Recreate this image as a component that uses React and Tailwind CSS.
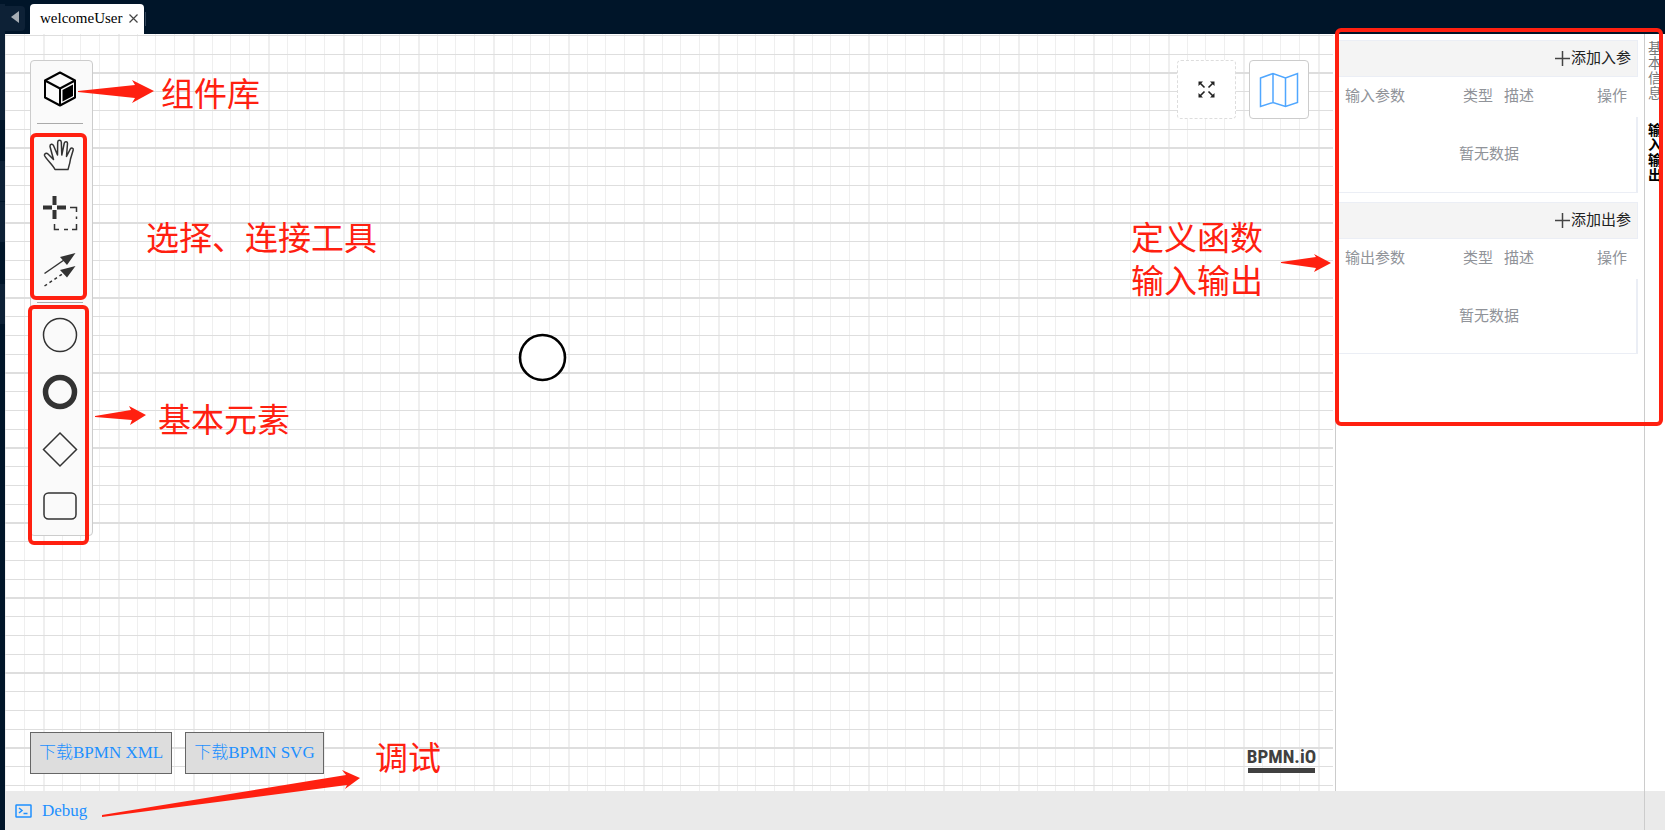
const RED = '#ff2010';

function Note({ className, children }) {
  return (
    <p className={'absolute z-20 whitespace-nowrap text-[33px] leading-[43px] text-[#ff2010] ' + className}>{children}</p>
  );
}

function Frame({ className }) {
  return <div className={'pointer-events-none absolute z-20 rounded-md border-4 border-[#ff2010] ' + className} />;
}

function Arrow({ className, width, height, points }) {
  return (
    <svg className={'pointer-events-none absolute z-20 ' + className} width={width} height={height} aria-hidden="true">
      <polygon points={points} fill={RED} />
    </svg>
  );
}

function Grid() {
  return (
    <svg className="absolute inset-0 h-full w-full" aria-hidden="true">
      <defs>
        <pattern id="grid" x="38" y="38" width="75" height="75" patternUnits="userSpaceOnUse">
          <path d="M19.5 0V75M37.5 0V75M56.5 0V75" stroke="#efefef" />
          <path d="M1 0V75" stroke="#efefef" strokeWidth="2" />
          <path d="M0 19.5H75M0 38.5H75M0 57.5H75" stroke="#dedede" />
          <path d="M0 1H75" stroke="#dedede" strokeWidth="2" />
        </pattern>
      </defs>
      <rect width="100%" height="100%" fill="url(#grid)" />
    </svg>
  );
}

const stroke = { fill: 'none', stroke: '#333', strokeWidth: 1.5 };

const tools = [
  {
    name: 'Hand tool',
    art: (
      <path
        {...stroke}
        strokeLinejoin="round"
        d="M13 34.500 C11 30 4 24 2.500 20.500 C2 18.500 4.500 17.500 6 19 L11.500 24.500 L8 11.500 C7.800 9 10.500 8.500 11.500 10.500 L15.500 20 L15.700 7 C16 4.700 19 4.700 19.300 7 L19.800 20 L22.300 8 C23 6 25.700 6.500 25.500 8.500 L24.500 21.500 L28.300 14 C29.500 12 31.700 13.200 31.200 15 L28.500 24 C28 28 27 31 26 34.500 Z"
      />
    ),
  },
  {
    name: 'Lasso tool',
    art: (
      <g fill="none" stroke="#333">
        <path strokeWidth="4" d="M12.500 4V13M12.500 18V27M1 15.500H10M15 15.500H24" />
        <path strokeWidth="1.500" d="M28 15.500H34.500V20M34.500 24.500V27M34.500 32V37.500H30M26 37.500H22M17 37.500H12.500V32" />
      </g>
    ),
  },
  {
    name: 'Connect tool',
    art: (
      <g stroke="#333" strokeWidth="1.500" fill="none">
        <path d="M2.500 24.500L22 11" />
        <path d="M2.500 37L24 22.500" strokeDasharray="3 3" />
        <path fill="#333" stroke="none" d="M33.500 4L25 16L18 8ZM33.500 17L25 28.500L18 21Z" />
      </g>
    ),
  },
];

const shapes = [
  { name: 'Start event', art: <circle cx="18" cy="19" r="16.500" {...stroke} /> },
  { name: 'End event', art: <circle cx="18" cy="19" r="14.500" fill="none" stroke="#333" strokeWidth="5.500" /> },
  { name: 'Gateway', art: <path {...stroke} d="M18 3L34.500 19.500L18 36L1.500 19.500Z" /> },
  { name: 'Task', art: <rect x="2" y="6" width="32" height="26" rx="4.500" {...stroke} /> },
];

function ToolButton({ name, art }) {
  return (
    <button type="button" aria-label={name} className="flex h-[57px] w-full items-center justify-center">
      <svg width="36" height="40" viewBox="0 0 36 40" aria-hidden="true">{art}</svg>
    </button>
  );
}

function Palette() {
  return (
    <div className="absolute left-[25px] top-[26px] flex h-[476px] w-[63px] flex-col rounded-sm border border-[#ccc] bg-[#fafafa] pr-[3px]">
      <button type="button" aria-label="Component library" className="flex h-[58px] items-center justify-center">
        <svg width="34" height="36" viewBox="0 0 34 36" fill="none" stroke="#000" strokeWidth="2" strokeLinejoin="round" aria-hidden="true">
          <path d="M17 1.500L32 9.500V26.500L17 34.500L2 26.500V9.500ZM2 9.500L17 17.500L32 9.500M17 17.500V34.500" />
          <path fill="#000" stroke="none" d="M19.500 19L30 13.500V25L19.500 30.500Z" />
        </svg>
      </button>
      <hr className="mx-[6px] mt-[6px] border-[#aaa]" />
      <div className="flex flex-col pt-[2px]">
        {tools.map((t) => <ToolButton key={t.name} {...t} />)}
      </div>
      <hr className="mx-[6px] mt-[5px] border-[#aaa]" />
      <div className="flex flex-col pt-1">
        {shapes.map((s) => <ToolButton key={s.name} {...s} />)}
      </div>
    </div>
  );
}

function Params({ title, action }) {
  return (
    <section>
      <div className="flex h-[37px] items-center justify-end border-y border-r border-[#ebeef5] bg-[#f4f4f4] pr-[6px]">
        <button type="button" className="flex items-center gap-px text-[15px] text-[#222]">
          <svg width="15" height="15" stroke="#444" strokeWidth="1.500" aria-hidden="true"><path d="M0 7.500H15M7.500 0V15" /></svg>
          {action}
        </button>
      </div>
      <table className="w-full table-fixed border-collapse text-[15px] leading-5 text-[#909399]">
        <colgroup>
          <col />
          <col className="w-[41px]" />
          <col className="w-[93px]" />
          <col className="w-[40px]" />
        </colgroup>
        <thead>
          <tr className="h-10 text-left">
            <th className="pb-[2px] pl-[9px] font-normal">{title}</th>
            <th className="pb-[2px] font-normal">类型</th>
            <th className="pb-[2px] font-normal">描述</th>
            <th className="pb-[2px] font-normal">操作</th>
          </tr>
        </thead>
        <tbody>
          <tr className="h-[75px]">
            <td colSpan={4} className="border-b border-r-2 border-[#ebeef5] pl-[6px] text-center">暂无数据</td>
          </tr>
        </tbody>
      </table>
    </section>
  );
}

export default function App() {
  return (
    <div className="relative flex min-h-screen overflow-hidden bg-white font-['Liberation_Sans','Noto_Sans_CJK_SC',sans-serif]">
      <div className="flex w-[5px] shrink-0 flex-col bg-[#001529]">
        <div className="h-[4px]" />
        <div className="h-[116px] bg-[#0d2136]" />
        <div className="h-[41px]" />
        <div className="mb-px h-[40px] bg-[#0d2136]" />
        <div className="h-[40px] bg-[#0d2136]" />
        <div className="h-[42px]" />
        <div className="h-[40px] bg-[#0d2136]" />
      </div>
      <div className="flex min-w-0 flex-1 flex-col">
        <header className="flex h-[34px] shrink-0 bg-[#001529] pt-[4px] font-['Liberation_Serif',serif]">
          <button type="button" aria-label="Scroll tabs left" className="mt-[2px] mr-[5px] flex h-[25px] w-5 items-start justify-center rounded-r bg-[#0d2136] pt-[5px]">
            <svg width="8" height="12" fill="#a6adb4" aria-hidden="true"><path d="M8 0V12L0 6Z" /></svg>
          </button>
          <div className="flex w-[114px] items-center rounded-t bg-white pl-[10px]">
            <a href="#welcomeUser" className="flex-1 pb-[3px] text-[15px] leading-5 text-black">welcomeUser</a>
            <button type="button" aria-label="Close tab" className="mr-[6px] pb-[2px]">
              <svg width="9" height="9" stroke="#444" strokeWidth="1.200" aria-hidden="true"><path d="M0.500 0.500L8.500 8.500M8.500 0.500L0.500 8.500" /></svg>
            </button>
          </div>
          <div className="ml-px mt-2 h-[14px] w-px bg-[#334559]" />
        </header>

        <div className="flex flex-1">
          <main className="relative mr-[2px] flex-1">
            <Grid />
            <Palette />
            <svg className="absolute left-[513px] top-[299px]" width="50" height="50" aria-hidden="true">
              <circle cx="24.500" cy="24.500" r="22.500" fill="#fff" stroke="#000" strokeWidth="2.600" />
            </svg>
            <div className="absolute right-6 top-[26px] flex gap-[13px]">
              <button type="button" aria-label="Full screen" className="flex h-[59px] w-[59px] items-center justify-center rounded-sm border border-dashed border-[#ddd] bg-white">
                <svg width="17" height="17" viewBox="0 0 17 17" aria-hidden="true">
                  <path fill="none" stroke="#222" strokeWidth="1.600" d="M2 2L6.500 6.500M15 2L10.500 6.500M2 15L6.500 10.500M15 15L10.500 10.500" />
                  <path fill="#222" d="M0.500 0.500H5L0.500 5ZM16.500 0.500H12L16.500 5ZM0.500 16.500H5L0.500 12ZM16.500 16.500H12L16.500 12Z" />
                </svg>
              </button>
              <button type="button" aria-label="Minimap" className="flex h-[59px] w-[60px] items-center justify-center rounded-sm border border-[#ccc] bg-white">
                <svg width="40" height="36" fill="none" stroke="#50a7ff" strokeWidth="1.500" aria-hidden="true">
                  <path d="M1.500 6L14 1.500L26.500 6L38.500 1.500V30.500L26.500 34.500L14 30.500L1.500 34.500ZM14 1.500V30.500M26.500 6V34.500" />
                </svg>
              </button>
            </div>
            <div className="absolute bottom-[17px] left-[25px] flex gap-[13px] font-['Liberation_Serif','Noto_Sans_CJK_SC',serif]">
              <button type="button" className="h-[42px] border border-[#666] bg-[#ddd] px-2 text-[17px] font-light text-[#1e90ff]">下载BPMN XML</button>
              <button type="button" className="h-[42px] border border-[#666] bg-[#ddd] px-2 text-[17px] font-light text-[#1e90ff]">下载BPMN SVG</button>
            </div>
            <a
              href="#bpmn-io"
              className="absolute bottom-[18px] right-[18px] flex w-[67px] justify-center border-b-[5px] border-[#404040] font-['Roboto_Condensed','Liberation_Sans_Narrow','Liberation_Sans',sans-serif] text-[19px] font-bold leading-[22px] text-[#404040]"
            >
              BPMN.iO
            </a>
          </main>

          <aside className="flex w-[330px] shrink-0 border-l border-[#ccc]">
            <div className="flex flex-1 flex-col gap-[9px] pr-[6px] pt-[6px]">
              <Params title="输入参数" action="添加入参" />
              <Params title="输出参数" action="添加出参" />
            </div>
            <nav className="flex w-[21px] flex-col gap-[22px] border-l border-[#ccc] pl-[3px] pt-[7px] text-[14px] leading-[15px]">
              <a href="#basic" className="w-[15px] break-all text-[#777]">基本信息</a>
              <a href="#io" className="w-[15px] break-all font-bold text-black">输入输出</a>
            </nav>
          </aside>
        </div>

        <footer className="flex h-[39px] shrink-0 justify-between bg-[#eaeaea]">
          <button type="button" className="flex items-center gap-[10px] pl-[10px] font-['Liberation_Serif',serif] text-[17px] text-[#1e90ff]">
            <svg width="17" height="14" fill="none" stroke="#1e90ff" strokeWidth="1.500" aria-hidden="true">
              <rect x="1" y="1" width="15" height="12" rx="0.500" />
              <path d="M4 4L7 6.500L4 9M8.500 9.500H12.500" />
            </svg>
            Debug
          </button>
          <div className="w-[21px] border-l border-[#ccc]" />
        </footer>
      </div>

      <Frame className="left-[30px] top-[133px] h-[167px] w-[57px]" />
      <Frame className="left-[28px] top-[305px] h-[240px] w-[61px]" />
      <Frame className="right-[2px] top-[28px] h-[398px] w-[328px]" />
      <Note className="left-[161px] top-[73px]">组件库</Note>
      <Note className="left-[146px] top-[217px]">选择、连接工具</Note>
      <Note className="left-[158px] top-[399px]">基本元素</Note>
      <Note className="left-[375px] top-[737px]">调试</Note>
      <Note className="right-[402px] top-[217px]">定义函数<br />输入输出</Note>
      <Arrow className="left-[78px] top-[78px]" width="80" height="28" points="0,13 57,7 54,2 76,13 54,25 57,20 0,14" />
      <Arrow className="left-[94px] top-[405px]" width="56" height="22" points="1,11 37,5 35,1 52,10 36,20 38,15 1,12" />
      <Arrow className="right-[328px] top-[252px]" width="56" height="22" points="0,10 35,5 33,2 50,11 33,20 35,16 0,11" />
      <Arrow className="left-[100px] top-[768px]" width="264" height="52" points="2,47 246,7 242,2 260,10 245,21 247,17 2,49" />
    </div>
  );
}
